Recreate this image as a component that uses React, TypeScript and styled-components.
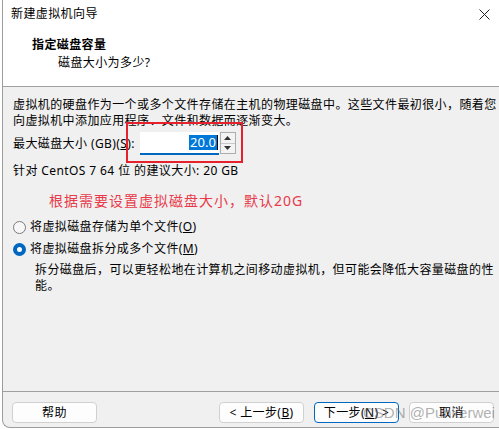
import React from "react";
import styled, { createGlobalStyle } from "styled-components";

const GlobalStyle = createGlobalStyle`
  html, body {
    margin: 0;
    padding: 0;
    background: #ffffff;
  }
  body {
    font-family: "Noto Sans", "Noto Sans CJK SC", sans-serif;
    font-size: 12px;
    letter-spacing: 0.4px;
    color: #000;
  }
`;

const Window = styled.div`
  position: relative;
  margin-left: 2px;
  width: 497px;
  height: 428px;
  box-sizing: border-box;
  display: flex;
  flex-direction: column;
  border-left: 1px solid #9c9c9c;
  border-bottom: 1px solid #9c9c9c;
  border-bottom-left-radius: 8px;
  background: #f0f0f0;
  overflow: hidden;
`;

const TitleBar = styled.div`
  height: 28px;
  display: flex;
  align-items: center;
  justify-content: space-between;
  padding: 0 9px 0 8px;
  background: #fff;
  line-height: 16px;
`;

const Header = styled.div`
  height: 59px;
  background: #fff;
  border-bottom: 1px solid #a0a0a0;
  display: flex;
  flex-direction: column;
  padding-top: 9px;
  box-sizing: border-box;
`;

const Heading = styled.div`
  padding-left: 29px;
  font-weight: bold;
  line-height: 16px;
`;

const SubHeading = styled.div`
  padding-left: 55px;
  margin-top: 2px;
  line-height: 16px;
`;

const Body = styled.div`
  flex: 1;
  padding: 10px 0 0 10px;
  display: flex;
  flex-direction: column;
  white-space: nowrap;
`;

const Paragraph = styled.p<{ $indent?: number; $top?: number }>`
  margin: ${(p) => p.$top ?? 0}px 0 0 ${(p) => p.$indent ?? 0}px;
  line-height: 16px;
`;

const SizeRow = styled.div`
  margin-top: 3px;
  height: 23px;
  display: flex;
  align-items: center;
`;

const Label = styled.span`
  line-height: 16px;
  margin-right: 5px;
`;

const Key = styled.span`
  text-decoration: underline;
`;

const SpinWrap = styled.div`
  position: relative;
  display: flex;
  align-items: stretch;
  height: 23px;
`;

const Highlight = styled.div`
  position: absolute;
  left: -14px;
  top: -10px;
  width: 117px;
  height: 41px;
  box-sizing: border-box;
  border: 2px solid #e5222c;
  pointer-events: none;
`;

const NumberBox = styled.div`
  width: 79px;
  box-sizing: border-box;
  background: #fff;
  border-bottom: 2px solid #0067c0;
  display: flex;
  align-items: center;
  justify-content: flex-end;
  padding-right: 1px;
  font-size: 13px;
  letter-spacing: 0;
`;

const Selected = styled.span`
  background: #0078d7;
  color: #fff;
  line-height: 15px;
  padding: 0 1px;
`;

const Caret = styled.span`
  width: 1px;
  height: 15px;
  background: #000;
`;

const Spinner = styled.div`
  margin-left: 1px;
  width: 16px;
  height: 22px;
  box-sizing: border-box;
  border: 1px solid #adadad;
  background: #f3f3f3;
  display: flex;
  flex-direction: column;
`;

const SpinButton = styled.div<{ $down?: boolean }>`
  flex: 1;
  display: flex;
  align-items: center;
  justify-content: center;
  border-top: ${(p) => (p.$down ? "1px solid #c8c8c8" : "none")};
`;

const Annotation = styled.div`
  margin: 12px 0 0 36px;
  font-size: 14px;
  letter-spacing: 1px;
  line-height: 20px;
  color: #e83a4a;
`;

const RadioRow = styled.label<{ $top: number }>`
  margin-top: ${(p) => p.$top}px;
  height: 18px;
  display: flex;
  align-items: center;
  gap: 4px;
  line-height: 16px;
`;

const RadioDot = styled.span<{ $checked?: boolean }>`
  width: 13px;
  height: 13px;
  box-sizing: border-box;
  border-radius: 50%;
  border: ${(p) => (p.$checked ? "4px solid #0067c0" : "1px solid #7a7a7a")};
  background: ${(p) => (p.$checked ? "#fff" : "#f7f7f7")};
`;

const Footer = styled.div`
  border-top: 1px solid #a0a0a0;
  height: 36px;
  box-sizing: border-box;
  display: flex;
  justify-content: space-between;
  padding: 10px 5px 0 9px;
`;

const ButtonGroup = styled.div`
  display: flex;
  gap: 10px;
`;

const Button = styled.button<{ $primary?: boolean }>`
  width: 85px;
  height: 21px;
  padding: 0;
  font-family: inherit;
  font-size: 12px;
  letter-spacing: 0.4px;
  line-height: 16px;
  color: #000;
  background: #fdfdfd;
  border: 1px solid ${(p) => (p.$primary ? "#0067c0" : "#d0d0d0")};
  border-radius: 4px;
`;

const Watermark = styled.div`
  position: absolute;
  left: 360px;
  top: 403px;
  font-family: "Liberation Sans", "Noto Sans CJK SC", sans-serif;
  font-size: 15px;
  letter-spacing: 0;
  line-height: 20px;
  color: rgba(110, 110, 110, 0.55);
  pointer-events: none;
`;

const Arrow = ({ down }: { down?: boolean }) => (
  <svg width="7" height="4" viewBox="0 0 7 4">
    <path d={down ? "M0 0 L7 0 L3.5 4 Z" : "M0 4 L7 4 L3.5 0 Z"} fill="#333" />
  </svg>
);

export default function App() {
  return (
    <>
      <GlobalStyle />
      <Window>
        <TitleBar>
          <span>新建虚拟机向导</span>
          <svg width="11" height="11" viewBox="0 0 11 11">
            <path d="M0.5 0.5 L10.5 10.5 M10.5 0.5 L0.5 10.5" stroke="#222" strokeWidth="1" />
          </svg>
        </TitleBar>
        <Header>
          <Heading>指定磁盘容量</Heading>
          <SubHeading>磁盘大小为多少?</SubHeading>
        </Header>
        <Body>
          <Paragraph>
            虚拟机的硬盘作为一个或多个文件存储在主机的物理磁盘中。这些文件最初很小，随着您
            <br />
            向虚拟机中添加应用程序、文件和数据而逐渐变大。
          </Paragraph>
          <SizeRow>
            <Label>
              最大磁盘大小 (GB)(<Key>S</Key>):
            </Label>
            <SpinWrap>
              <NumberBox>
                <Selected>20.0</Selected>
                <Caret />
              </NumberBox>
              <Spinner>
                <SpinButton>
                  <Arrow />
                </SpinButton>
                <SpinButton $down>
                  <Arrow down />
                </SpinButton>
              </Spinner>
              <Highlight />
            </SpinWrap>
          </SizeRow>
          <Paragraph $top={8}>针对 CentOS 7 64 位 的建议大小: 20 GB</Paragraph>
          <Annotation>根据需要设置虚拟磁盘大小，默认20G</Annotation>
          <RadioRow $top={7}>
            <RadioDot />
            <span>
              将虚拟磁盘存储为单个文件(<Key>O</Key>)
            </span>
          </RadioRow>
          <RadioRow $top={4}>
            <RadioDot $checked />
            <span>
              将虚拟磁盘拆分成多个文件(<Key>M</Key>)
            </span>
          </RadioRow>
          <Paragraph $indent={22} $top={4}>
            拆分磁盘后，可以更轻松地在计算机之间移动虚拟机，但可能会降低大容量磁盘的性
            <br />
            能。
          </Paragraph>
        </Body>
        <Footer>
          <Button>帮助</Button>
          <ButtonGroup>
            <Button>
              &lt; 上一步(<Key>B</Key>)
            </Button>
            <Button $primary>
              下一步(<Key>N</Key>) &gt;
            </Button>
            <Button>取消</Button>
          </ButtonGroup>
        </Footer>
        <Watermark>CSDN @Punkerwei</Watermark>
      </Window>
    </>
  );
}
